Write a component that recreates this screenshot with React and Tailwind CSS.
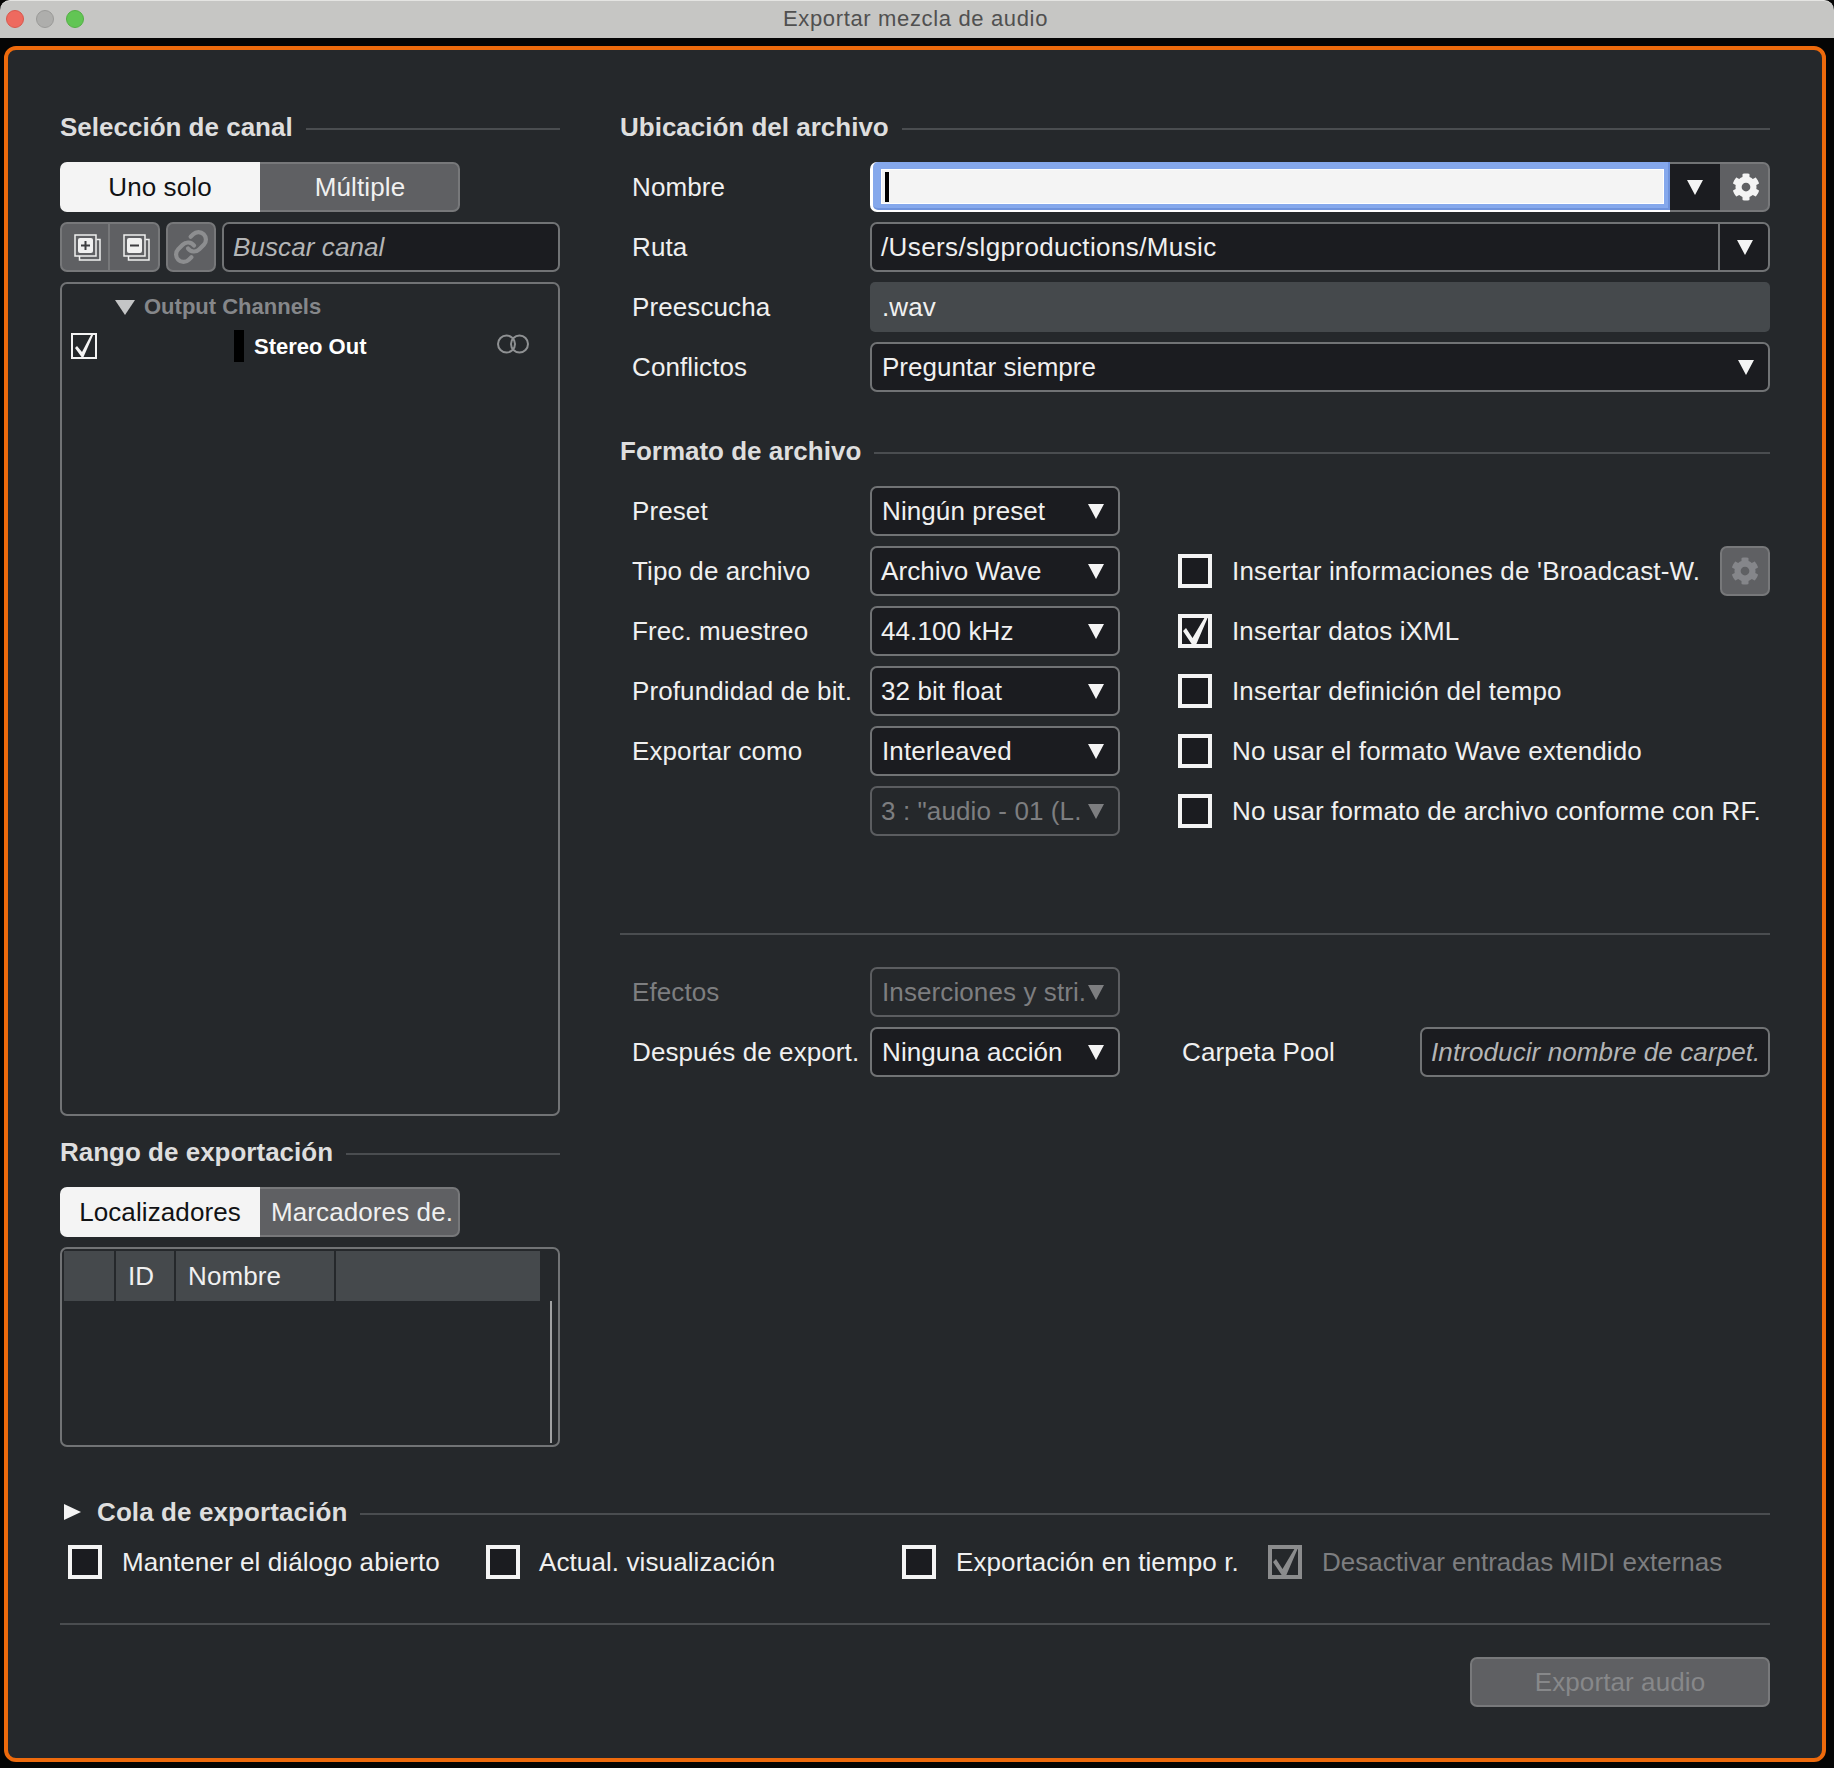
import React from "react";
import { Link } from "lucide-react";
import { FaCog } from "react-icons/fa";

const Down = ({ className = "w-4 text-[#f4f4f4]" }) => (
  <svg viewBox="0 0 16 15" preserveAspectRatio="none" className={`h-[15px] shrink-0 ${className}`}>
    <polygon points="0,0 16,0 8,15" fill="currentColor" />
  </svg>
);

const Tick = ({ className = "text-[#f4f4f4]" }) => (
  <svg viewBox="0 0 34 34" className={`w-[34px] h-[34px] absolute -left-1 -top-1 overflow-visible ${className}`}>
    <polygon points="5,17 8,14 14.5,24 27,3 30,3 17.5,32 15,32" fill="currentColor" />
  </svg>
);

const Check = ({ checked, disabled }) => (
  <div
    className={`relative w-[34px] h-[34px] shrink-0 border-4 ${
      disabled ? "border-[#8b8c8d] bg-[#25282b]" : "border-[#f4f4f4] bg-[#1b1c20]"
    }`}
  >
    {checked && <Tick className={disabled ? "text-[#8b8c8d]" : "text-[#f4f4f4]"} />}
  </div>
);

const Heading = ({ children, className = "" }) => (
  <div className={`flex items-center h-[30px] ${className}`}>
    <span className="text-[26px] leading-[30px] font-bold tracking-normal text-[#dedede] whitespace-nowrap">{children}</span>
    <div className="flex-1 h-[2px] bg-[#4a4d50] ml-[13px] mt-[3px]" />
  </div>
);

const Label = ({ children, disabled }) => (
  <div className={`w-[250px] shrink-0 pl-3 whitespace-nowrap ${disabled ? "text-[#7d7e80]" : "text-[#f0f0f0]"}`}>
    {children}
  </div>
);

const Select = ({ children, disabled, tight, className = "w-[250px]" }) => (
  <div
    className={`${className} h-[50px] shrink-0 flex items-center justify-between pl-[10px] pr-[14px] rounded-[7px] border-2 ${
      disabled ? "border-[#5b5d60] text-[#7d7e80]" : "border-[#717375] bg-[#1b1c20] text-[#f0f0f0]"
    }`}
  >
    <span className={`whitespace-nowrap ${tight ? "-ml-px" : ""}`}>{children}</span>
    <Down className={disabled ? "w-4 text-[#7d7e80]" : "w-4 text-[#f4f4f4]"} />
  </div>
);

const Toggle = ({ a, b, nudge = "pl-[2px]" }) => (
  <div className="flex w-[400px] h-[50px]">
    <div className="w-[200px] flex items-center justify-center rounded-l-[7px] bg-[#f4f4f4] text-[#111214]">{a}</div>
    <div className={`w-[200px] flex items-center justify-center rounded-r-[7px] bg-[#5f6063] border-2 border-l-0 border-[#77787a] text-[#f0f0f0] whitespace-nowrap ${nudge}`}>
      {b}
    </div>
  </div>
);

const StackIcon = ({ minus }) => (
  <svg viewBox="0 0 27 27" className="w-[27px] h-[27px]" fill="none">
    <path d="M22.5 5.5h3.5v20.500h-20.500v-4" stroke="#f0f0f0" strokeWidth="1.500" />
    <rect x="1" y="1" width="21" height="21" stroke="#f0f0f0" strokeWidth="1.500" />
    <rect x="4" y="4" width="15" height="15" rx="2" fill="#f0f0f0" />
    <rect x="7" y="10.500" width="9" height="2" fill="#3c3d40" />
    {!minus && <rect x="10.500" y="7" width="2" height="9" fill="#3c3d40" />}
  </svg>
);

const Options = [
  ["Insertar informaciones de 'Broadcast-W.", false, "tracking-[0.17px]"],
  ["Insertar datos iXML", true, ""],
  ["Insertar definición del tempo", false, ""],
  ["No usar el formato Wave extendido", false, ""],
  ["No usar formato de archivo conforme con RF.", false, ""],
];

const FormatRows = [
  ["Tipo de archivo", "Archivo Wave", true],
  ["Frec. muestreo", "44.100 kHz", true],
  ["Profundidad de bit.", "32 bit float", true],
  ["Exportar como", "Interleaved", false],
  ["", '3 : "audio - 01 (L.', true],
];

const App = () => {
  return (
    <div className="w-[1834px] h-[1768px] bg-[#050505] overflow-hidden text-[26px] leading-[30px] tracking-[0.1px] font-['Liberation_Sans',Arial,sans-serif]">
      {/* title bar */}
      <div className="relative h-[38px] rounded-t-[10px] bg-[#c6c6c4] border-t border-[#e4e4e2] flex items-center justify-center pb-[2px] pr-[3px]">
        <div className="absolute left-[6px] top-[9px] flex gap-3">
          <div className="w-[18px] h-[18px] rounded-full bg-[#ee6a5f] border border-[#d9574c]" />
          <div className="w-[18px] h-[18px] rounded-full bg-[#aeaeac] border border-[#9a9a98]" />
          <div className="w-[18px] h-[18px] rounded-full bg-[#62c554] border border-[#52b044]" />
        </div>
        <span className="text-[22px] tracking-[0.65px] text-[#505050]">Exportar mezcla de audio</span>
      </div>

      {/* window body */}
      <div className="mt-2 ml-1 w-[1822px] h-[1716px] border-4 border-[#ee6a0c] rounded-[12px] bg-[#25282b] pt-[62px] pl-[52px] pr-[52px]">
        <div className="flex gap-[60px]">
          {/* left column */}
          <div className="w-[500px] shrink-0">
            <Heading>Selección de canal</Heading>
            <div className="mt-5">
              <Toggle a="Uno solo" b="Múltiple" />
            </div>
            <div className="mt-[10px] flex h-[50px]">
              <div className="w-[50px] flex items-center justify-center pl-[4px] rounded-l-[7px] bg-[#5f6063] border-2 border-[#77787a]">
                <StackIcon />
              </div>
              <div className="w-[50px] flex items-center justify-center pl-[5px] rounded-r-[7px] bg-[#5f6063] border-2 border-l-0 border-[#77787a]">
                <StackIcon minus />
              </div>
              <div className="w-[50px] ml-[6px] flex items-center justify-center rounded-[7px] bg-[#5f6063] border-2 border-[#77787a]">
                <Link size={36} strokeWidth={2.8} className="text-[#8d8e90]" />
              </div>
              <div className="flex-1 ml-[6px] flex items-center pl-[9px] rounded-[7px] bg-[#1b1c20] border-2 border-[#717375] italic text-[#b4b5b6]">
                Buscar canal
              </div>
            </div>
            <div className="mt-[10px] h-[834px] rounded-[7px] border-2 border-[#717375]">
              <div className="mt-[8px] h-[30px] pl-[53px] flex items-center gap-[9px]">
                <Down className="w-5 text-[#c4c5c6]" />
                <span className="text-[22px] font-bold tracking-normal text-[#85878a]">Output Channels</span>
              </div>
              <div className="mt-[8px] h-8 flex items-center">
                <div className="relative ml-[9px] w-[26px] h-[26px] border-2 border-[#f4f4f4]">
                  <svg viewBox="0 0 26 26" className="absolute -left-[2px] -top-[2px] w-[26px] h-[26px] overflow-visible">
                    <polygon points="4,15 6,13 11,19 21,0 23,0 12.500,24 10.500,24" fill="#f4f4f4" />
                  </svg>
                </div>
                <div className="ml-[137px] w-[10px] h-8 bg-black" />
                <span className="ml-[10px] pt-[2px] text-[22px] font-bold tracking-normal text-white">Stereo Out</span>
                <svg viewBox="0 0 32 20" className="ml-auto mr-[29px] mb-[5px] w-8 h-5" fill="none">
                  <circle cx="9.500" cy="10" r="8.500" stroke="#8f9193" strokeWidth="2" />
                  <circle cx="22.500" cy="10" r="8.500" stroke="#8f9193" strokeWidth="2" />
                </svg>
              </div>
            </div>

            <Heading className="mt-[21px]">Rango de exportación</Heading>
            <div className="mt-[20px]">
              <Toggle a="Localizadores" b="Marcadores de." nudge="pl-[6px]" />
            </div>
            <div className="mt-[10px] h-[200px] rounded-[7px] border-2 border-[#717375] p-[2px] flex flex-col">
              <div className="flex gap-[2px] w-[476px] h-[50px] text-[#f0f0f0]">
                <div className="w-[50px] bg-[#45494c]" />
                <div className="w-[58px] bg-[#45494c] flex items-center pl-[12px]">ID</div>
                <div className="w-[158px] bg-[#45494c] flex items-center pl-[12px]">Nombre</div>
                <div className="flex-1 bg-[#45494c]" />
              </div>
              <div className="flex-1 flex justify-end pr-[4px]">
                <div className="w-[2px] bg-[#a0a1a2]" />
              </div>
            </div>
          </div>

          {/* right column */}
          <div className="w-[1150px] shrink-0">
            <Heading>Ubicación del archivo</Heading>
            <div className="mt-5 flex flex-col gap-[10px]">
              <div className="flex items-center h-[50px]">
                <Label>Nombre</Label>
                <div className="w-[800px] h-[50px] bg-white rounded-l-[7px] pl-[3px] pb-[2px]">
                  <div className="h-full bg-[#85a8ec] border-b-2 border-r-2 border-[#6f93dc] rounded-l-[5px] pl-[8px] pr-1 pt-[7px] pb-1">
                    <div className="h-full bg-[#f4f4f4] border border-white flex items-center pl-[3px]">
                      <div className="w-1 h-[30px] bg-black" />
                    </div>
                  </div>
                </div>
                <div className="w-[50px] h-[50px] bg-[#1b1c20] border-y-2 border-[#717375] flex items-center justify-center">
                  <Down />
                </div>
                <div className="w-[50px] h-[50px] bg-[#5f6063] border-2 border-l-0 border-[#77787a] rounded-r-[7px] flex items-center justify-center pl-[3px]">
                  <FaCog size={28} className="text-[#f4f4f4]" />
                </div>
              </div>
              <div className="flex items-center h-[50px]">
                <Label>Ruta</Label>
                <div className="w-[900px] h-[50px] flex rounded-[7px] bg-[#1b1c20] border-2 border-[#717375] text-[#f0f0f0]">
                  <div className="flex-1 flex items-center pl-[9px] border-r-2 border-[#717375] tracking-[0.39px]">/Users/slgproductions/Music</div>
                  <div className="w-[48px] flex items-center justify-center pl-[2px]">
                    <Down />
                  </div>
                </div>
              </div>
              <div className="flex items-center h-[50px]">
                <Label>Preescucha</Label>
                <div className="w-[900px] h-[50px] flex items-center pl-[12px] rounded-[5px] bg-[#45494c] text-[#f0f0f0]">.wav</div>
              </div>
              <div className="flex items-center h-[50px]">
                <Label>Conflictos</Label>
                <Select className="w-[900px] tracking-normal">Preguntar siempre</Select>
              </div>
            </div>

            <Heading className="mt-[44px]">Formato de archivo</Heading>
            <div className="mt-5 flex flex-col gap-[10px]">
              <div className="flex items-center h-[50px]">
                <Label>Preset</Label>
                <Select>Ningún preset</Select>
              </div>
              {FormatRows.map(([label, value, tight], i) => (
                <div key={i} className="flex items-center h-[50px]">
                  <Label>{label}</Label>
                  <Select disabled={i === 4} tight={tight}>{value}</Select>
                  <div className="ml-[58px] flex flex-1 items-center gap-[20px] text-[#f0f0f0]">
                    <Check checked={Options[i][1]} />
                    <span className={`whitespace-nowrap ${Options[i][2]}`}>{Options[i][0]}</span>
                    {i === 0 && (
                      <div className="ml-auto w-[50px] h-[50px] rounded-[7px] bg-[#5f6063] border-2 border-[#77787a] flex items-center justify-center">
                        <FaCog size={28} className="text-[#85868a]" />
                      </div>
                    )}
                  </div>
                </div>
              ))}
            </div>

            <div className="mt-[97px] h-[2px] bg-[#4a4d50]" />
            <div className="mt-[32px] flex flex-col gap-[10px]">
              <div className="flex items-center h-[50px]">
                <Label disabled>Efectos</Label>
                <Select disabled>Inserciones y stri.</Select>
              </div>
              <div className="flex items-center h-[50px]">
                <Label>Después de export.</Label>
                <Select>Ninguna acción</Select>
                <div className="w-[300px] pl-[62px] text-[#f0f0f0]">Carpeta Pool</div>
                <div className="flex-1 h-[50px] rounded-[7px] bg-[#1b1c20] border-2 border-[#717375] flex items-center pl-[9px] italic text-[#b4b5b6] whitespace-nowrap overflow-hidden">
                  Introducir nombre de carpet.
                </div>
              </div>
            </div>
          </div>
        </div>

        {/* export queue */}
        <div className="mt-[50px] flex items-center h-[30px]">
          <svg viewBox="0 0 17 16" className="ml-1 w-[17px] h-4 text-[#f4f4f4]">
            <polygon points="0,0 17,8 0,16" fill="currentColor" />
          </svg>
          <span className="ml-[16px] font-bold tracking-[0.1px] text-[#dedede] whitespace-nowrap">Cola de exportación</span>
          <div className="flex-1 h-[2px] bg-[#4a4d50] ml-[13px] mt-[3px]" />
        </div>
        <div className="mt-[18px] flex items-center h-[34px] pl-2 text-[#f0f0f0]">
          <Check />
          <span className="ml-[20px] w-[364px] whitespace-nowrap">Mantener el diálogo abierto</span>
          <Check />
          <span className="ml-[19px] w-[363px] whitespace-nowrap">Actual. visualización</span>
          <Check />
          <span className="ml-[20px] w-[312px] whitespace-nowrap">Exportación en tiempo r.</span>
          <Check checked disabled />
          <span className="ml-[20px] whitespace-nowrap tracking-normal text-[#7d7e80]">Desactivar entradas MIDI externas</span>
        </div>
        <div className="mt-[44px] h-[2px] bg-[#4a4d50]" />
        <div className="mt-[32px] flex justify-end">
          <div className="w-[300px] h-[50px] rounded-[7px] bg-[#5f6063] border-2 border-[#78797b] flex items-center justify-center text-[#87888a]">
            Exportar audio
          </div>
        </div>
      </div>
    </div>
  );
};

export default App;
